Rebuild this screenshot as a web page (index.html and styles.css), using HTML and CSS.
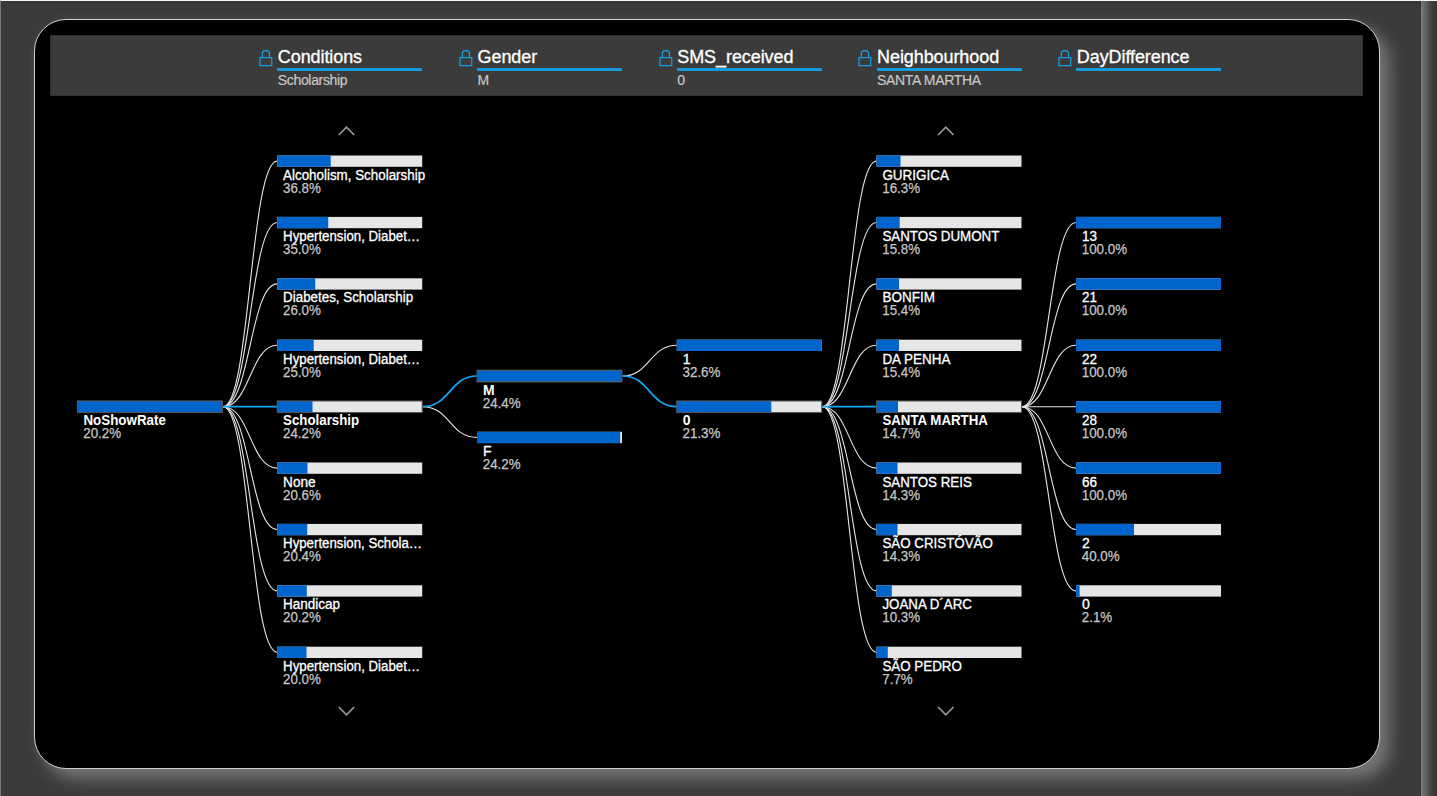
FILE: index.html
```html
<!DOCTYPE html>
<html lang="en">
<head>
<meta charset="utf-8">
<title>NoShowRate</title>
<link rel="stylesheet" href="styles.css">
</head>
<body>
<svg width="0" height="0" class="defs">
  <symbol id="lock" viewBox="0 0 14 18">
    <path d="M1 7.5h11.7v8H1zM3.3 7.5V3.8Q3.3.6 6.9.6T10.5 3.8V7.5" fill="none" stroke="#149fe0" stroke-width="1.25"/>
  </symbol>
</svg>
<main class="page">
  <section class="panel">
    <header class="levels">
      <div class="level"><svg class="lock"><use href="#lock"/></svg><div class="level-body"><h2>Conditions</h2><p>Scholarship</p></div></div>
      <div class="level"><svg class="lock"><use href="#lock"/></svg><div class="level-body"><h2>Gender</h2><p>M</p></div></div>
      <div class="level"><svg class="lock"><use href="#lock"/></svg><div class="level-body"><h2>SMS_received</h2><p>0</p></div></div>
      <div class="level"><svg class="lock"><use href="#lock"/></svg><div class="level-body"><h2>Neighbourhood</h2><p>SANTA MARTHA</p></div></div>
      <div class="level"><svg class="lock"><use href="#lock"/></svg><div class="level-body"><h2>DayDifference</h2></div></div>
    </header>
    <svg class="tree" id="tree" viewBox="50 96 1313 650"></svg>
  </section>
  <div class="edge"></div>
</main>
<script src="tree.js"></script>
</body>
</html>
```
FILE: styles.css
```css
* { box-sizing: border-box; }
body {
  margin: 0;
  background: #3b3b3b;
  font-family: "Liberation Sans", Arial, sans-serif;
  overflow: hidden;
}
.defs { display: block; }
.page {
  width: 1437px;
  height: 796px;
  display: flex;
  justify-content: space-between;
  border-top: 1px solid #f4f4f4;
  border-left: 1px solid #777;
  background: linear-gradient(#353836, #3b3b3b 12px);
}
.panel {
  width: 1346px;
  height: 750px;
  margin: 18px 0 0 33px;
  padding: 15px 15px 0;
  border: 1px solid #cfcfcf;
  border-radius: 32px;
  background: #000;
  box-shadow: 10px 10px 15px #747474, 0 0 10px #444;
}
.edge {
  width: 16px;
  background: linear-gradient(90deg, #7b7b7b, #696969 3px, #484848 9px, #373737 14px);
}
.levels {
  width: 1313px;
  height: 61px;
  padding-left: 208px;
  display: grid;
  grid-template-columns: repeat(5, 199.75px);
  background: #3b3b3b;
  border: 1px solid #303030;
}
.level {
  display: flex;
  gap: 4.4px;
  padding-top: 13px;
}
.lock { width: 14px; height: 18px; flex: none; margin-top: 0.5px; }
.level-body { width: 145px; margin-top: -3px; }
.level-body h2 {
  margin: 0;
  height: 25px;
  border-bottom: 3px solid #159bdc;
  color: #fff;
  font-size: 18px;
  line-height: 22px;
  font-weight: 400;
  letter-spacing: -0.08px;
  text-indent: 0.4px;
  -webkit-text-stroke: 0.3px #fff;
}
.level-body p {
  margin: 1px 0 0;
  color: #c8c6c4;
  font-size: 14px;
  line-height: 16px;
  letter-spacing: -0.33px;
  text-indent: 0.4px;
  -webkit-text-stroke: 0.2px #c8c6c4;
}
.tree { display: block; width: 1313px; height: 650px; }
.link { fill: none; stroke: #e6e6e6; stroke-width: 1.1; }
.link.active { stroke: #12a8f5; stroke-width: 1.7; }
.track { fill: #e6e6e6; }
.fill { fill: #0064cd; }
.outline { fill: none; stroke: #555; stroke-width: 1; }
.name { fill: #fff; font-size: 14px; stroke: #fff; stroke-width: 0.3px; }
.name.active { font-weight: 700; stroke: none; }
.rate { fill: #c8c6c4; font-size: 14px; stroke: #c8c6c4; stroke-width: 0.25px; }
.chevron { fill: none; stroke: #999; stroke-width: 1.7; }
```
FILE: tree.js
```javascript
// Each node: row index (may be fractional), label, rate, filled width in px, label width in px.
const BAR = 145, STEP = 61.4, TOP = 161.1;
const columns = [
  { x: 77.5, selected: 0, nodes: [[4, "NoShowRate", "20.2%", 145, 82.5]] },
  { x: 277.2, selected: 4, arrows: true, nodes: [
    [0, "Alcoholism, Scholarship", "36.8%", 53.5, 142],
    [1, "Hypertension, Diabet…", "35.0%", 51, 137],
    [2, "Diabetes, Scholarship", "26.0%", 38, 130],
    [3, "Hypertension, Diabet…", "25.0%", 36.5, 137],
    [4, "Scholarship", "24.2%", 35.3, 76],
    [5, "None", "20.6%", 30.3, 32.5],
    [6, "Hypertension, Schola…", "20.4%", 30, 139],
    [7, "Handicap", "20.2%", 29.6, 57],
    [8, "Hypertension, Diabet…", "20.0%", 29.3, 137]] },
  { x: 477, selected: 0, nodes: [
    [3.5, "M", "24.4%", 145],
    [4.5, "F", "24.2%", 143.2]] },
  { x: 676.8, selected: 1, nodes: [
    [3, "1", "32.6%", 145],
    [4, "0", "21.3%", 94.5]] },
  { x: 876.5, selected: 4, arrows: true, nodes: [
    [0, "GURIGICA", "16.3%", 24, 66.5],
    [1, "SANTOS DUMONT", "15.8%", 23.2, 117],
    [2, "BONFIM", "15.4%", 22.5, 52.5],
    [3, "DA PENHA", "15.4%", 22.5, 68],
    [4, "SANTA MARTHA", "14.7%", 21.5, 105.5],
    [5, "SANTOS REIS", "14.3%", 21, 89.5],
    [6, "SÃO CRISTÓVÃO", "14.3%", 21, 110.5],
    [7, "JOANA D´ARC", "10.3%", 15.3, 89.5],
    [8, "SÃO PEDRO", "7.7%", 11.3, 79.5]] },
  { x: 1076, selected: -1, nodes: [
    [1, "13", "100.0%", 145, 15],
    [2, "21", "100.0%", 145, 15],
    [3, "22", "100.0%", 145, 15],
    [4, "28", "100.0%", 145, 15],
    [5, "66", "100.0%", 145, 15],
    [6, "2", "40.0%", 58],
    [7, "0", "2.1%", 3.6]] }
];

const rowY = row => TOP + row * STEP;
const rateWidth = { 4: 30.4, 5: 37.8, 6: 45.2 };
let links = "", activeLinks = "", nodes = "";

columns.forEach((col, c) => {
  if (c > 0) {
    const parent = columns[c - 1];
    const sx = parent.x + BAR + 0.5;
    const sy = rowY(parent.nodes[parent.selected][0]);
    const mid = (sx + col.x) / 2;
    col.nodes.forEach((n, i) => {
      const y = rowY(n[0]);
      const d = `M${sx} ${sy}C${mid} ${sy} ${mid} ${y} ${col.x} ${y}`;
      if (i === col.selected) activeLinks += `<path class="link active" d="${d}"/>`;
      else links += `<path class="link" d="${d}"/>`;
    });
  }
  col.nodes.forEach(([row, name, rate, width, len], i) => {
    const y = rowY(row), on = i === col.selected;
    const base = Math.floor(y + 19.05);
    const fit = len ? ` textLength="${len}" lengthAdjust="spacingAndGlyphs"` : "";
    nodes += `<rect class="track" x="${col.x}" y="${y - 5.6}" width="${BAR}" height="11.3"/>
      <rect class="fill" x="${col.x}" y="${y - 5.6}" width="${width}" height="11.3"/>
      ${on ? `<rect class="outline" x="${col.x}" y="${y - 5.8}" width="${BAR}" height="11.7"/>` : ""}
      <text class="name${on ? " active" : ""}" x="${col.x + 5.9}" y="${base}"${fit}>${name}</text>
      <text class="rate" x="${col.x + 5.8}" y="${base + 13}" textLength="${rateWidth[rate.length]}" lengthAdjust="spacingAndGlyphs">${rate}</text>`;
  });
  if (col.arrows) {
    const x = col.x + 69.3;
    nodes += `<path class="chevron" d="M${x - 7.7} 135L${x} 127.2L${x + 7.7} 135M${x - 7.7} 707L${x} 714.8L${x + 7.7} 707"/>`;
  }
});

document.getElementById("tree").innerHTML = links + activeLinks + nodes;
```
